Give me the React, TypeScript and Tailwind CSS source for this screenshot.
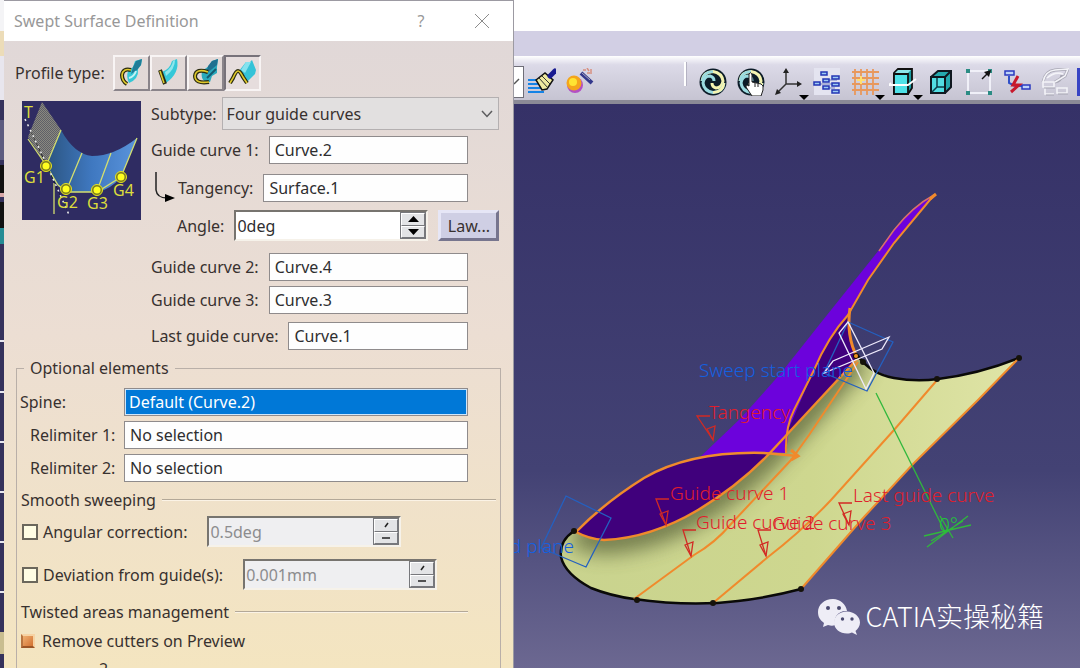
import { useState, type ReactNode } from "react";

const inputClass =
  "h-7 w-full min-w-0 flex-1 border border-[#8f8b8c] bg-[#fefefe] px-[5px] text-base text-[#2e2e30] outline-none";

interface FieldProps {
  id: string;
  label: string;
  value: string;
  className?: string;
}

function Field({ id, label, value, className = "" }: FieldProps) {
  return (
    <div className={`flex items-center gap-2.5 pr-[45px] ${className}`}>
      <label htmlFor={id}>{label}</label>
      <input id={id} defaultValue={value} className={inputClass} />
    </div>
  );
}

interface SpinFieldProps {
  id: string;
  value: string;
  disabled?: boolean;
}

function SpinField({ id, value, disabled = false }: SpinFieldProps) {
  const button =
    "flex flex-1 items-center justify-center border border-t-white border-l-white border-r-[#77787c] border-b-[#77787c] bg-[#e3e4e6]";
  return (
    <div
      className={`flex h-[31px] w-[194px] border-2 border-t-[#77746f] border-l-[#77746f] border-r-[#f6f2ea] border-b-[#f6f2ea] ${disabled ? "bg-[#efeff1]" : "bg-white"}`}
    >
      <input
        id={id}
        defaultValue={value}
        disabled={disabled}
        className={`w-full min-w-0 flex-1 bg-transparent pl-px text-base leading-5 outline-none ${disabled ? "text-[#8c8c8e]" : "text-[#2e2e30]"}`}
      />
      <div className="flex w-[26px] flex-col border border-[#77787c]">
        <button aria-label="Increase" disabled={disabled} className={button}>
          <svg width="11" height="6" viewBox="0 0 11 6">
            {disabled ? <path d="M4 5l3-4" stroke="#222" strokeWidth="1.5" /> : <path d="M0 6L5.5 0L11 6z" />}
          </svg>
        </button>
        <button aria-label="Decrease" disabled={disabled} className={button}>
          <svg width="11" height="6" viewBox="0 0 11 6">
            {disabled ? <path d="M1 3h8" stroke="#222" strokeWidth="1.5" /> : <path d="M0 0h11L5.5 6z" />}
          </svg>
        </button>
      </div>
    </div>
  );
}

function Heading({ children, className = "" }: { children: ReactNode; className?: string }) {
  return (
    <div className={`flex h-6 items-center gap-1.5 pl-1 ${className}`}>
      <h2>{children}</h2>
      <div className="h-0.5 flex-1 border-t border-[#b3a898] bg-[#fbf3e6]" />
    </div>
  );
}

const profiles = [
  {
    name: "Explicit",
    drawing: (
      <>
        <path d="M12 14L17 10L19 4L26 2L25 8L22 12Q23 22 13 26Q10 20 12 14z" fill="#35c8d6" />
        <path d="M17 10L20 4L26 2L25 8L21 13L15 17z" fill="#1f7d98" />
        <path d="M13 21Q18 20 20 14" fill="none" stroke="#c4f2f4" strokeWidth="2" />
        <path d="M15 13Q7 11 6 18Q6 24 11 27" fill="none" stroke="#2b2b10" strokeWidth="4" />
        <path d="M15 13Q7 11 6 18Q6 24 11 27" fill="none" stroke="#e0c92c" strokeWidth="1.6" />
      </>
    ),
  },
  {
    name: "Line",
    drawing: (
      <>
        <path d="M9 15Q17 12 19 4L24 2Q27 16 13 26z" fill="#35c8d8" />
        <path d="M12 15Q19 11 20 4L22 3Q22 12 13 19z" fill="#8ee6ec" />
        <path d="M7 13L12 27" stroke="#2b2b10" strokeWidth="4" />
        <path d="M7 14L11 26" stroke="#e0c92c" strokeWidth="1.6" />
      </>
    ),
  },
  {
    name: "Circle",
    drawing: (
      <>
        <path d="M12 14L19 9L22 4L28 2L27 10L27 16L22 19L20 25Q10 26 12 14z" fill="#2aa9bc" />
        <path d="M18 9L22 4L28 2L27 8L16 17z" fill="#1f7090" />
        <path d="M17 21L26 12" stroke="#155a70" strokeWidth="2" />
        <path d="M18 15Q6 11 5 19Q5 27 19 25" fill="none" stroke="#2b2b10" strokeWidth="4" />
        <path d="M18 15Q6 11 5 19Q5 27 19 25" fill="none" stroke="#e0c92c" strokeWidth="1.6" />
      </>
    ),
  },
  {
    name: "Conic",
    drawing: (
      <>
        <path d="M12 14L19 5L22 6L25 3L29 13L28 17L20 25z" fill="#35c3d8" />
        <path d="M14 13L19 5L24 5L18 16z" fill="#86e2ee" />
        <path d="M3 26L6 21Q9 14 11 14Q13 14 16 20L20 26" fill="none" stroke="#2b2b10" strokeWidth="4" />
        <path d="M3 26L6 21Q9 14 11 14Q13 14 16 20L20 26" fill="none" stroke="#e0c92c" strokeWidth="1.6" />
      </>
    ),
  },
];

function Thumbnail() {
  return (
    <svg width="119" height="119" viewBox="0 0 119 119" className="mt-1 shrink-0">
      <defs>
        <linearGradient id="sheet" x1="0" x2="1">
          <stop offset="0" stopColor="#2b5480" />
          <stop offset="0.5" stopColor="#3f78c0" />
          <stop offset="1" stopColor="#5a94dc" />
        </linearGradient>
        <pattern id="mesh" width="2" height="2" patternUnits="userSpaceOnUse">
          <rect width="2" height="2" fill="#5f6068" />
          <rect width="1" height="1" fill="#8a897f" />
          <rect x="1" y="1" width="1" height="1" fill="#8a897f" />
        </pattern>
      </defs>
      <rect width="119" height="119" fill="#2f2c62" />
      <path d="M20 1L39 29L24 64L6 36z" fill="url(#mesh)" />
      <path d="M39 29Q52 53 70 55Q92 55 115 37L99 76Q88 89 75 91L45 91Q32 85 24 65z" fill="url(#sheet)" />
      <g fill="none" stroke="#d3de70" strokeWidth="1.3">
        <path d="M39 29L24 65M60 52L45 88M89 52L75 90M115 37L99 76" />
        <path d="M6 38L24 64L36 84L45 91H75L99 76" />
        <path d="M32 82V113" />
      </g>
      <path d="M3 18L24 62L48 116" stroke="#eee" strokeWidth="1.5" strokeDasharray="2 4" />
      {[
        [24, 65],
        [44, 88],
        [75, 89],
        [99, 76],
      ].map(([x, y]) => (
        <g key={x}>
          <circle cx={x} cy={y} r="5.5" fill="#7a7a20" stroke="#e8e620" />
          <circle cx={x} cy={y} r="3.5" fill="#ffff20" />
        </g>
      ))}
      <g fill="#dcdc3c" fontSize="16">
        <text x="2" y="17">T</text>
        <text x="2" y="82">G1</text>
        <text x="35" y="107">G2</text>
        <text x="65" y="108">G3</text>
        <text x="91" y="95">G4</text>
      </g>
    </svg>
  );
}

function Dialog() {
  const [profile, setProfile] = useState(3);
  const checkbox = "h-4 w-4 shrink-0 appearance-none border-2 border-[#6b675c] bg-[#fffde4] checked:bg-[#e08a45]";

  return (
    <section className="flex h-full w-[47%] min-w-[510px] shrink-0 flex-col overflow-hidden border-t border-r border-[#9c9aa2] bg-linear-to-b from-[#dfd7d8] via-[#ecded3] to-[#f4e5c0]">
      <header className="flex h-10 shrink-0 items-center bg-white pr-6 pl-2.5 text-[#989898]">
        <h1 className="flex-1 text-base">Swept Surface Definition</h1>
        <button aria-label="Help" className="w-4 text-base">?</button>
        <button aria-label="Close" className="ml-[46px]">
          <svg width="14" height="14" viewBox="0 0 14 14" stroke="#8c8c8c">
            <path d="M0 0L14 14M14 0L0 14" />
          </svg>
        </button>
      </header>

      <div className="mt-3.5 flex h-9 shrink-0 items-center pl-[11px]">
        <span className="w-[98px]">Profile type:</span>
        {profiles.map((item, i) => (
          <button
            key={item.name}
            aria-label={item.name}
            onClick={() => setProfile(i)}
            className={`flex h-9 w-[37px] items-center justify-center border-2 ${
              profile === i
                ? "border-t-[#77727a] border-l-[#77727a] border-r-[#f8f4f4] border-b-[#f8f4f4] bg-[#e6dddd]"
                : "border-t-[#f8f4f4] border-l-[#f8f4f4] border-r-[#8a848a] border-b-[#8a848a]"
            }`}
          >
            <svg width="32" height="32" viewBox="0 0 32 32">
              {item.drawing}
            </svg>
          </button>
        ))}
      </div>

      <div className="mt-1.5 flex shrink-0 gap-2.5 pl-[18px]">
        <Thumbnail />
        <div className="min-w-0 flex-1">
          <div className="flex items-center gap-[5px] pr-3.5">
            <label htmlFor="subtype">Subtype:</label>
            <div className="relative flex-1">
              <select
                id="subtype"
                className="h-[33px] w-full appearance-none border border-[#b4b0b1] bg-[#e2e0e0] px-1 text-base outline-none"
              >
                <option>Four guide curves</option>
              </select>
              <svg width="12" height="8" viewBox="0 0 12 8" className="pointer-events-none absolute top-[13px] right-1.5" fill="none" stroke="#5c5c5e" strokeWidth="1.5">
                <path d="M1 1L6 6.5L11 1" />
              </svg>
            </div>
          </div>
          <Field id="guide1" label="Guide curve 1:" value="Curve.2" className="mt-1.5" />
          <div className="mt-2.5 flex items-center pl-1">
            <svg width="23" height="32" viewBox="0 0 23 32" className="-my-1 shrink-0">
              <path d="M1 0V18Q2 26 12 26" fill="none" stroke="#222" strokeWidth="1.5" />
              <path d="M10 22L20 26L10 30z" />
            </svg>
            <Field id="tangency" label="Tangency:" value="Surface.1" className="flex-1" />
          </div>
          <div className="mt-2 flex items-center gap-2.5 pl-[26px]">
            <label htmlFor="angle">Angle:</label>
            <SpinField id="angle" value="0deg" />
            <button className="h-[31px] w-[61px] border-3 border-t-[#e6e6f6] border-l-[#e6e6f6] border-r-[#77758e] border-b-[#77758e] bg-[#cfcfe4]">
              Law...
            </button>
          </div>
          <Field id="guide2" label="Guide curve 2:" value="Curve.4" className="mt-3" />
          <Field id="guide3" label="Guide curve 3:" value="Curve.3" className="mt-[5px]" />
          <Field id="last" label="Last guide curve:" value="Curve.1" className="mt-2" />
        </div>
      </div>

      <fieldset className="mt-1.5 mr-3 ml-3 min-w-0 flex-1 border border-[#b9afa8]">
        <legend className="ml-[7px] px-1.5">Optional elements</legend>
        <div className="mt-2 flex flex-col gap-[5px] pr-8">
          <div className="flex items-center">
            <label htmlFor="spine" className="w-[107px] pl-[3px]">Spine:</label>
            <div className="flex h-7 flex-1 border border-[#8f8b8c] bg-[#cfe6fa] p-px">
              <input id="spine" defaultValue="Default (Curve.2)" className="w-full bg-[#0078d7] px-[3px] text-base text-white outline-none" />
            </div>
          </div>
          <div className="flex items-center">
            <label htmlFor="relimiter1" className="w-[107px] pl-[13px]">Relimiter 1:</label>
            <input id="relimiter1" defaultValue="No selection" className={inputClass} />
          </div>
          <div className="flex items-center">
            <label htmlFor="relimiter2" className="w-[107px] pl-[13px]">Relimiter 2:</label>
            <input id="relimiter2" defaultValue="No selection" className={inputClass} />
          </div>
        </div>

        <Heading className="mt-1.5 mr-1">Smooth sweeping</Heading>
        <div className="mt-1 flex items-center gap-5 pl-[5px]">
          <label className="flex items-center gap-[5px]">
            <input type="checkbox" className={checkbox} />
            Angular correction:
          </label>
          <SpinField id="angular" value="0.5deg" disabled />
        </div>
        <div className="mt-3 flex items-center gap-5 pl-[5px]">
          <label className="flex items-center gap-[5px]">
            <input type="checkbox" className={checkbox} />
            Deviation from guide(s):
          </label>
          <SpinField id="deviation" value="0.001mm" disabled />
        </div>
        <Heading className="mt-2.5 mr-8">Twisted areas management</Heading>
        <label className="mt-[5px] flex items-center gap-[7px] pl-1">
          <input
            type="checkbox"
            defaultChecked
            className="h-3.5 w-3.5 appearance-none border-2 border-t-[#f6d3a4] border-l-[#b87440] border-r-[#f6d3a4] border-b-[#9c5526] bg-linear-to-br from-[#f0b070] to-[#d07030]"
          />
          Remove cutters on Preview
        </label>
        <div className="mt-1.5 pl-[82px] leading-5">2</div>
      </fieldset>
    </section>
  );
}

function Swirl() {
  return (
    <>
      <circle cx="14" cy="14" r="13.5" fill="#0c1c28" />
      <path d="M3 13Q4 4 14 3.500Q23 5 24 13Q23 20 17 20Q13 19 13 15" fill="none" stroke="#f4f3b0" strokeWidth="3" />
      <path d="M25 15Q24 24 14 24.500Q5 23 4 15Q5 8 11 8Q15 9 15 13" fill="none" stroke="#9adbe0" strokeWidth="3" />
      <path d="M14 24.500Q24 24 25 15" fill="none" stroke="#f4f3b0" strokeWidth="2.500" />
      <path d="M3 13Q4 4 14 3.500" fill="none" stroke="#9adbe0" strokeWidth="2.500" />
    </>
  );
}

interface Tool {
  name: string;
  menu?: boolean;
  drawing: ReactNode;
}

const paintTools: Tool[] = [
  {
    name: "Painter",
    drawing: (
      <>
        <path d="M0 12h14M0 16h14M0 20h15M0 24h16" stroke="#1583e6" strokeWidth="2" />
        <path d="M8 12L17 5L25 12L19 21L14 22z" fill="#efe9a0" stroke="#111" strokeWidth="1.5" />
        <path d="M11 10L20 20M14 8L22 16" stroke="#333" />
        <path d="M22 8L27 3" stroke="#181a90" strokeWidth="5" strokeLinecap="round" />
      </>
    ),
  },
  {
    name: "Material",
    drawing: (
      <>
        <circle cx="9" cy="17" r="8" fill="#b34fc4" />
        <circle cx="8" cy="15" r="7.5" fill="#f4a51c" />
        <circle cx="7" cy="14" r="4" fill="#ffe432" />
        <path d="M15 5L26 15" stroke="#33388c" strokeWidth="4" />
        <path d="M16 5L24 12" stroke="#aab" />
        <path d="M17 2h3M21 0l2 3M25 1v5M21 5h3" stroke="#d89080" strokeWidth="1.5" />
      </>
    ),
  },
];

const viewTools: Tool[] = [
  { name: "Update", drawing: <Swirl /> },
  {
    name: "Manual update",
    drawing: (
      <>
        <Swirl />
        <path d="M12 6Q14 3 15 7V14L24 16Q27 17 26 22L24 28H15L9 19Q9 16 12 18z" fill="#fff" stroke="#222" />
        <path d="M18 15v4M21 16v3" stroke="#222" />
      </>
    ),
  },
  {
    name: "Axis system",
    menu: true,
    drawing: (
      <>
        <path d="M11 2V16H24M11 16L2 25" fill="none" stroke="#333" strokeWidth="1.5" />
        <path d="M11 0l3 5H8zM27 16l-5-3v6zM0 27l2-6l4 4z" fill="#222" />
      </>
    ),
  },
  {
    name: "Tree",
    drawing: (
      <>
        <rect x="1" width="26" height="27" fill="#e4e4f0" />
        <path d="M6 16h20M14 12h10M14 20h8" stroke="#7080c0" />
        <path
          d="M8 4h6v3H8zM1 14h6v3H1zM10 11h6v3h-6zM10 18h6v3h-6zM19 8h7v3h-7zM19 15h7v3h-7zM19 22h7v3h-7z"
          fill="#9ccaf4"
          stroke="#2336b4"
          strokeWidth="1.5"
        />
      </>
    ),
  },
  {
    name: "Grid",
    menu: true,
    drawing: (
      <>
        <path d="M4 1V27M10 1V27M16 1V27M22 1V27M1 4H28M1 10H28M1 16H28M1 22H28" stroke="#e8985c" strokeWidth="1.8" />
        <path d="M10 8v8M6 12h8" stroke="#ffe070" strokeWidth="2" />
      </>
    ),
  },
  {
    name: "Section",
    menu: true,
    drawing: (
      <>
        <path d="M5 5L9 1H23V20L19 26H5z" fill="#189aa0" stroke="#111" strokeWidth="1.8" />
        <path d="M5 6H19V26H5z" fill="#4fe2e8" stroke="#111" strokeWidth="1.8" />
        <path d="M6 5L9 2H22L19 5z" fill="#8ce6ea" />
        <path d="M0 17H19L27 11M2 15l-2 2" fill="none" stroke="#fff" strokeWidth="1.8" />
      </>
    ),
  },
  {
    name: "Box",
    drawing: (
      <>
        <path d="M4 9L11 3H24V19L18 25H4z" fill="#25a9ae" stroke="#101820" strokeWidth="2" />
        <path d="M4 9H18V25H4zM18 9L24 3" fill="#52dde2" stroke="#101820" strokeWidth="2" />
        <path d="M10 10V19H17M10 19L5 24" fill="none" stroke="#0b3c48" strokeWidth="1.5" />
      </>
    ),
  },
  {
    name: "Fit",
    drawing: (
      <>
        <path d="M3 3H25V25H3z" fill="none" stroke="#f0f0f8" strokeWidth="2" />
        <path d="M1 1h4v4H1zM23 1h4v4h-4zM1 23h4v4H1zM23 23h4v4h-4z" fill="#2b8c84" />
        <path d="M17 11L24 4" stroke="#111" strokeWidth="1.5" />
        <path d="M26 2l-2 7l-5-5z" fill="#111" />
      </>
    ),
  },
  {
    name: "Disconnect",
    drawing: (
      <>
        <path d="M6 8V15L12 18M15 18H19" fill="none" stroke="#3050c8" strokeWidth="2" />
        <path d="M2 3h9v4H2zM19 17h8v4h-8z" fill="#bcd2f8" stroke="#2a3ac0" strokeWidth="1.5" />
        <path d="M15 8L10 17H16L8 24" fill="none" stroke="#c8192c" strokeWidth="3" />
      </>
    ),
  },
  {
    name: "Link",
    drawing: (
      <>
        <path d="M2 14Q4 3 14 2L27 1L24 8L14 14Q20 13 21 7" fill="none" stroke="#a6a5b2" strokeWidth="3" />
        <g fill="none" stroke="#f3f3f8" strokeWidth="1.6">
          <path d="M2 14Q4 3 14 2L27 1L24 8L14 14M6 10Q14 3 22 6" />
          <path d="M2 14h11v5H2zM16 20h10v5H16zM4 20v6h9" />
        </g>
        <path d="M3 20h11M17 26h10M5 27h8" stroke="#a6a5b2" />
      </>
    ),
  },
];

function ToolButton({ tool }: { tool: Tool }) {
  return (
    <button aria-label={tool.name} className="relative h-7 w-7 shrink-0">
      <svg width="28" height="28" viewBox="0 0 28 28">
        {tool.drawing}
      </svg>
      {tool.menu && (
        <svg width="10" height="5" viewBox="0 0 10 5" className="absolute -right-1.5 -bottom-1">
          <path d="M0 0H10L5 5z" />
        </svg>
      )}
    </button>
  );
}

function Toolbar() {
  return (
    <div className="flex h-12 shrink-0 items-center gap-2.5 overflow-hidden border-b-4 border-[#8b8a96] bg-linear-to-b from-white via-[#dcdae8] via-20% to-[#c6c4d2] pt-2">
      <div className="mr-[-6px] flex h-8 w-2.5 shrink-0 items-center border border-l-0 border-[#6f6e78] bg-white">
        <svg width="6" height="8" viewBox="0 0 6 8">
          <path d="M0 6L5 1" stroke="#555" strokeWidth="1.5" />
        </svg>
      </div>
      {paintTools.map((tool) => (
        <ToolButton key={tool.name} tool={tool} />
      ))}
      <div className="mb-4 ml-20 h-6 w-[3px] shrink-0 border-r border-[#b4b2c2] bg-white" />
      <div className="ml-0.5 flex shrink-0 gap-2.5">
        {viewTools.map((tool) => (
          <ToolButton key={tool.name} tool={tool} />
        ))}
      </div>
      <div className="-ml-0.5 h-7 w-7 shrink-0 border-3 border-[#3844c4] bg-[#ccd8f6]" />
    </div>
  );
}

const surface =
  "M573 531Q558 541 560 557Q564 574 590 588Q610 596 633 599Q690 607 737 601Q770 597 800 589L863 517L913 463L977 400L1018 358Q973 375 937 379Q888 384 865 364L857 358L785 435L767 455Q737 486 697 510Q650 536 603 540Q588 538 573 531z";
const seam = "M575 532Q588 539 603 540Q650 538 697 510Q737 486 767 455L857 358";

const guides = [
  "M633 599L693 555Q714 543 730 524L790 460L808 435L857 362",
  "M712 603L767 557Q802 530 830 500L893 430L937 379",
  "M800 589L863 517L913 463L977 400L1018 358",
];

function Leader({ x, y, dx = 8, dy = 26 }: { x: number; y: number; dx?: number; dy?: number }) {
  return (
    <g transform={`translate(${x} ${y})`} fill="none" stroke="#d22a24" strokeWidth="1.3">
      <path d={`M13 0H0L${dx} ${dy}`} />
      <path d={`M${dx} ${dy}L${dx - 6} ${dy - 11}L${dx + 2} ${dy - 14}z`} />
    </g>
  );
}

function Scene() {
  return (
    <svg viewBox="513 104 567 564" preserveAspectRatio="xMinYMin slice" className="block h-full w-full">
      <defs>
        <clipPath id="surfaceClip">
          <path d={surface} />
        </clipPath>
        <filter id="soften" x="-20%" y="-20%" width="140%" height="140%">
          <feGaussianBlur stdDeviation="10" />
        </filter>
        <linearGradient id="olive" x1="0" y1="0" x2="1" y2="0">
          <stop offset="0" stopColor="#c9d38e" />
          <stop offset="0.55" stopColor="#ced78f" />
          <stop offset="1" stopColor="#dfe4a6" />
        </linearGradient>
      </defs>

      <path d={surface} fill="url(#olive)" />
      <g clipPath="url(#surfaceClip)">
        <path d={seam} fill="none" stroke="#626a40" strokeWidth="28" opacity="0.85" filter="url(#soften)" />
      </g>
      <path d="M573 531Q558 541 560 557Q564 574 590 588Q610 596 633 599Q690 607 737 601Q770 597 800 589" fill="none" stroke="#0a0a08" strokeWidth="2.5" />
      <path d="M857 356Q870 374 893 378Q915 382 937 379Q978 374 1018 358" fill="none" stroke="#0a0a08" strokeWidth="2.5" />

      <path d="M933 195Q912 206 893 230L878 250L822 320L780 373L740 418L697 459Q738 450 785 453L788 428L813 370Q827 337 847 315L867 280L893 243z" fill="#6c02dc" />
      <path d="M847 317Q825 340 813 370L788 428V433L857 358Q848 342 847 317z" fill="#40007e" />
      <path d="M575 532Q603 503 643 478Q690 451 763 454L767 455Q737 486 697 510Q650 538 603 540Q588 539 575 532z" fill="#40007c" />

      <g fill="none" stroke="#f08a2c" strokeWidth="2">
        <path d="M933 195Q912 206 893 230L878 251" strokeWidth="1.5" stroke="#d8706a" />
        <path d="M933 195L893 243L867 280L847 315Q827 337 813 370L793 410Q784 428 785 453" />
        <path d="M849 308Q845 336 856 357" strokeWidth="3" />
        <path d="M575 532Q603 503 643 478Q690 451 763 453L797 456" strokeWidth="2.5" />
        <path d={seam} strokeWidth="2.5" />
        {guides.map((d) => (
          <path key={d} d={d} />
        ))}
        <path d="M790 450L797 456L790 460M929 199L935 194" strokeWidth="3" />
      </g>
      {[
        [573, 531],
        [636, 600],
        [712, 603],
        [800, 589],
        [1018, 358],
        [936, 379],
        [862, 362],
        [855, 356],
      ].map(([x, y]) => (
        <circle key={x} cx={x} cy={y} r="3" fill="#15120a" />
      ))}
      <circle cx="855" cy="356" r="2" fill="#f09020" />

      <g fill="none" stroke="#2460c0" strokeWidth="1.3">
        <path d="M847 322L892 342L866 391L823 373z" />
        <path d="M565 496L610 518L585 567L540 548z" />
      </g>
      <g fill="none" stroke="#eeeafc" strokeWidth="1.3">
        <path d="M847 322L838 333L865 389L873 373z" />
        <path d="M823 373L832 361L888 337L881 349z" />
      </g>

      <g fill="none" stroke="#30b83c" strokeWidth="1.3">
        <path d="M875 393L943 530" />
        <path d="M923 536L970 525M926 547L967 516M939 516L952 538M930 541L962 521" />
      </g>

      <Leader x={696} y={416} dx={16} dy={24} />
      <Leader x={655} y={499} dx={10} dy={26} />
      <Leader x={682} y={530} />
      <Leader x={757} y={530} />
      <Leader x={838} y={503} dx={10} dy={22} />

      <g fontSize="19" fontWeight="300">
        <g fill="#1460e0">
          <text x="698" y="377">Sweep start plane</text>
          <text x="573" y="553" textAnchor="end">Sweep end plane</text>
        </g>
        <g fill="#e01e2c">
          <text x="708" y="419">Tangency</text>
          <text x="669" y="500">Guide curve 1</text>
          <text x="695" y="529">Guide curve 2</text>
          <text x="771" y="530">Guide curve 3</text>
          <text x="852" y="502">Last guide curve</text>
        </g>
        <text x="938" y="531" fill="#20c838">0°</text>
      </g>
    </svg>
  );
}

function Watermark() {
  return (
    <div className="absolute right-9 bottom-8 flex items-center gap-1.5 text-white">
      <svg width="42" height="37" viewBox="0 0 42 37" fill="#eeedf6">
        <path d="M15 0C6 0 0 6 0 13C0 18 2 21 6 24L5 28L10 26C13 27 15 27 17 26C15 18 21 11 29 12C28 5 22 0 15 0z" />
        <path d="M29 12.5C21 12.5 16 17.5 16 23.5C16 30 22 34.5 29 34.5C31 34.5 33 34 34 33.5L39 36L37.500 32C40 30 42 27 42 23.5C42 17.500 36 12.500 29 12.500z" />
        <g fill="#4b4a70">
          <circle cx="10" cy="9" r="2" />
          <circle cx="21" cy="9" r="2" />
          <circle cx="24.5" cy="20" r="1.7" />
          <circle cx="34" cy="20" r="1.7" />
        </g>
      </svg>
      <span className="-mt-1 font-['Noto_Sans_CJK_SC',sans-serif] text-[27px] leading-9 font-light">CATIA实操秘籍</span>
    </div>
  );
}

function Edge() {
  return (
    <svg width="4" height="100%" className="block h-full w-1 shrink-0 bg-[#35325c]">
      <rect width="4" height="31" fill="#f4f4f6" />
      <rect y="31" width="4" height="25" fill="#ecdcb8" />
      <rect y="56" width="4" height="44" fill="#e8e6ee" />
      <rect y="120" width="4" height="40" fill="#5d5c80" />
      <rect y="165" width="4" height="28" fill="#111" />
      <rect y="193" width="4" height="4" fill="#d8a8a8" />
      <rect y="202" width="4" height="26" fill="#111" />
      <rect y="228" width="4" height="16" fill="#258c94" />
      <path d="M0 341H4M0 392H4M0 442H4M0 492H4M0 542H4M0 592H4" stroke="#e8e8f0" strokeWidth="2" />
      <rect y="632" width="4" height="22" fill="#c9bd90" />
    </svg>
  );
}

export default function App() {
  return (
    <div className="flex h-screen overflow-hidden font-['Noto_Sans',sans-serif] text-base text-[#38312f]">
      <Edge />
      <Dialog />
      <main className="flex min-w-0 flex-1 flex-col">
        <div className="h-[31px] shrink-0 bg-white" />
        <div className="h-[25px] shrink-0 bg-[#d2cfe4]" />
        <Toolbar />
        <div className="relative min-h-0 flex-1 bg-linear-to-b from-[#353167] via-[#434274] via-65% to-[#6c6891]">
          <Scene />
          <Watermark />
        </div>
      </main>
    </div>
  );
}
